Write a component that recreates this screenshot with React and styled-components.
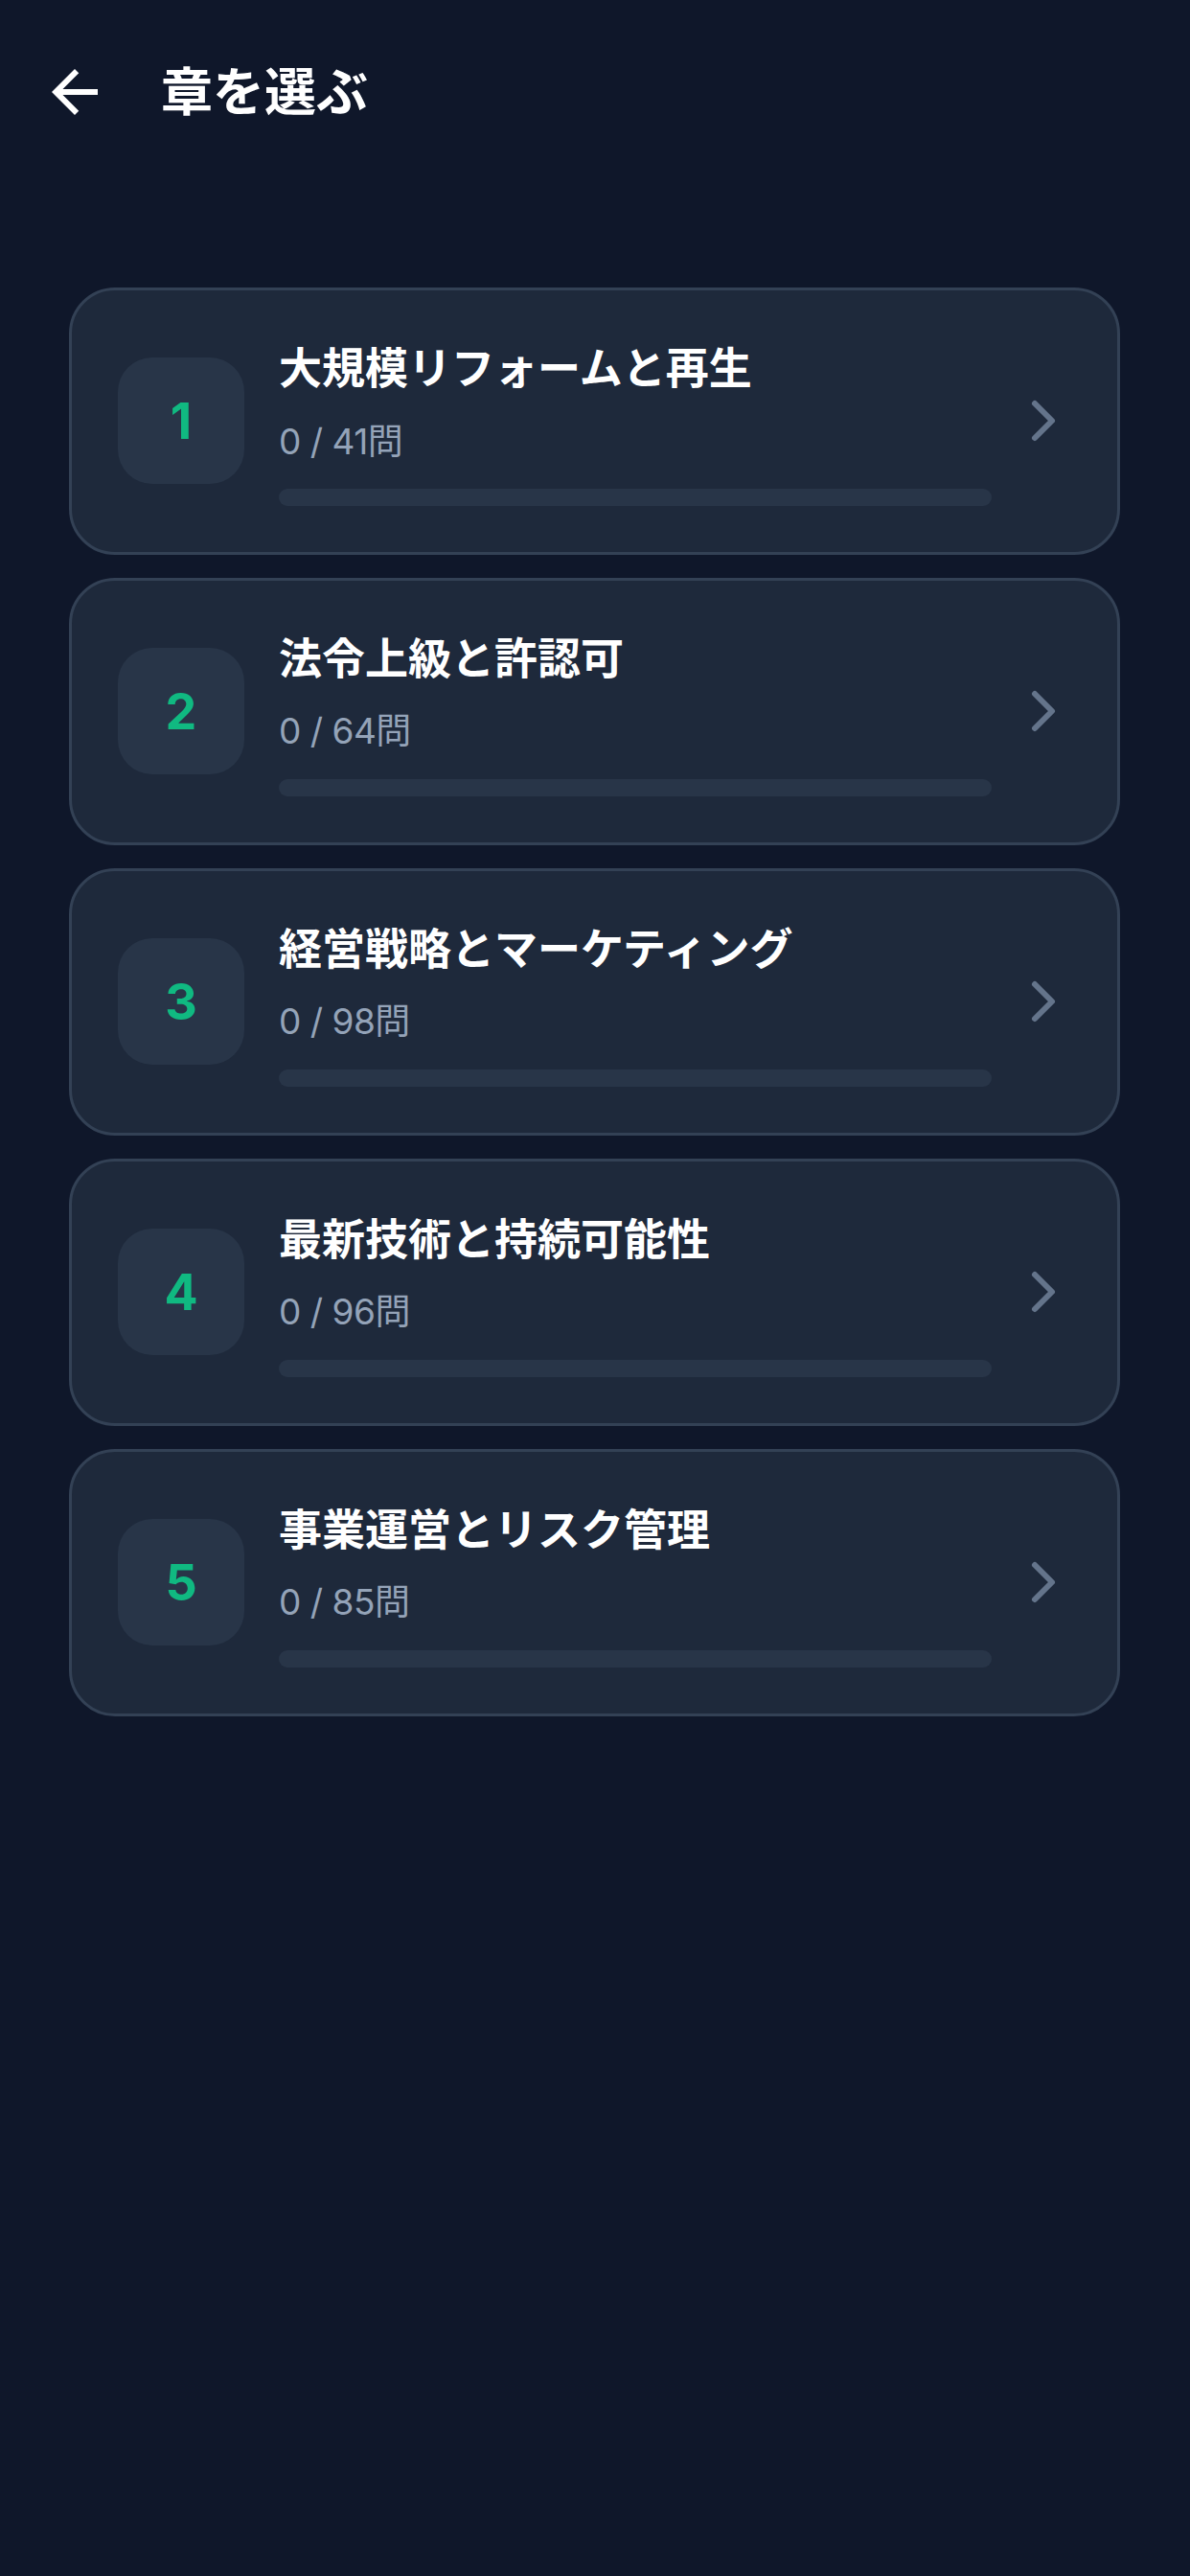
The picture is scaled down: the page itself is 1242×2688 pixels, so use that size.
import React from "react";
import styled, { createGlobalStyle } from "styled-components";

const GlobalStyle = createGlobalStyle`
  html, body {
    margin: 0;
    padding: 0;
    background: #0f172a;
    min-height: 100%;
  }
  body {
    font-family: Inter, "Noto Sans CJK JP", "Noto Sans", sans-serif;
    -webkit-font-smoothing: antialiased;
  }
  * { box-sizing: border-box; }
`;

const Page = styled.div`
  min-height: 2688px;
  background: #0f172a;
  color: #f8fafc;
`;

const Header = styled.header`
  height: 192px;
  display: flex;
  align-items: center;
  padding-left: 42px;
`;

const BackButton = styled.button`
  width: 72px;
  height: 72px;
  padding: 0;
  border: none;
  background: transparent;
  color: #ffffff;
  display: flex;
  align-items: center;
  justify-content: center;
  cursor: pointer;
`;

const PageTitle = styled.h1`
  margin: 0 0 0 54px;
  font-family: Inter, "Noto Sans CJK JP", sans-serif;
  font-size: 54px;
  font-weight: 700;
  line-height: 1.5;
  color: #ffffff;
`;

const List = styled.main`
  padding: 108px 73px 0 72px;
  display: flex;
  flex-direction: column;
  gap: 24px;
`;

const Card = styled.div`
  display: flex;
  align-items: center;
  background: #1e293b;
  border: 3px solid #334155;
  border-radius: 48px;
  padding: 48px 41px 48px 48px;
`;

const NumberBox = styled.div`
  flex: 0 0 132px;
  height: 132px;
  border-radius: 36px;
  background: #283548;
  display: flex;
  align-items: center;
  justify-content: center;
  font-family: Inter, sans-serif;
  font-size: 52px;
  font-weight: 700;
  color: #10b981;
`;

const Content = styled.div`
  flex: 1;
  min-width: 0;
  margin-left: 36px;
  display: flex;
  flex-direction: column;
`;

const ChapterTitle = styled.div`
  font-family: Inter, "Noto Sans CJK JP", sans-serif;
  font-size: 45px;
  font-weight: 700;
  line-height: 1.5;
  color: #ffffff;
  white-space: nowrap;
`;

const Count = styled.div`
  margin-top: 11px;
  font-family: Inter, "Noto Sans CJK JP", sans-serif;
  font-size: 37px;
  font-weight: 400;
  line-height: 1.66;
  letter-spacing: -0.5px;
  color: #94a3b8;
`;

const Track = styled.div`
  margin-top: 19px;
  height: 18px;
  border-radius: 9px;
  background: #283548;
  overflow: hidden;
`;

const Fill = styled.div`
  height: 100%;
  background: #10b981;
  border-radius: 9px;
`;

const Chevron = styled.div`
  flex: 0 0 72px;
  height: 72px;
  margin-left: 18px;
  color: #64748b;
  display: flex;
  align-items: center;
  justify-content: center;
`;

const chapters = [
  { n: 1, title: "大規模リフォームと再生", done: 0, total: 41 },
  { n: 2, title: "法令上級と許認可", done: 0, total: 64 },
  { n: 3, title: "経営戦略とマーケティング", done: 0, total: 98 },
  { n: 4, title: "最新技術と持続可能性", done: 0, total: 96 },
  { n: 5, title: "事業運営とリスク管理", done: 0, total: 85 },
];

const ArrowBack = () => (
  <svg width="72" height="72" viewBox="0 0 24 24" fill="currentColor">
    <path d="M20 11H7.83l5.59-5.59L12 4l-8 8 8 8 1.41-1.41L7.83 13H20v-2z" />
  </svg>
);

const ChevronRight = () => (
  <svg
    width="72"
    height="72"
    viewBox="0 0 24 24"
    fill="none"
    stroke="currentColor"
    strokeWidth="2"
    strokeLinecap="round"
    strokeLinejoin="round"
  >
    <path d="m9 18 6-6-6-6" />
  </svg>
);

export default function App() {
  return (
    <>
      <GlobalStyle />
      <Page>
        <Header>
          <BackButton aria-label="戻る">
            <ArrowBack />
          </BackButton>
          <PageTitle>章を選ぶ</PageTitle>
        </Header>
        <List>
          {chapters.map((c) => (
            <Card key={c.n}>
              <NumberBox>{c.n}</NumberBox>
              <Content>
                <ChapterTitle>{c.title}</ChapterTitle>
                <Count>
                  {c.done} / {c.total}問
                </Count>
                <Track>
                  <Fill style={{ width: `${(c.done / c.total) * 100}%` }} />
                </Track>
              </Content>
              <Chevron>
                <ChevronRight />
              </Chevron>
            </Card>
          ))}
        </List>
      </Page>
    </>
  );
}
